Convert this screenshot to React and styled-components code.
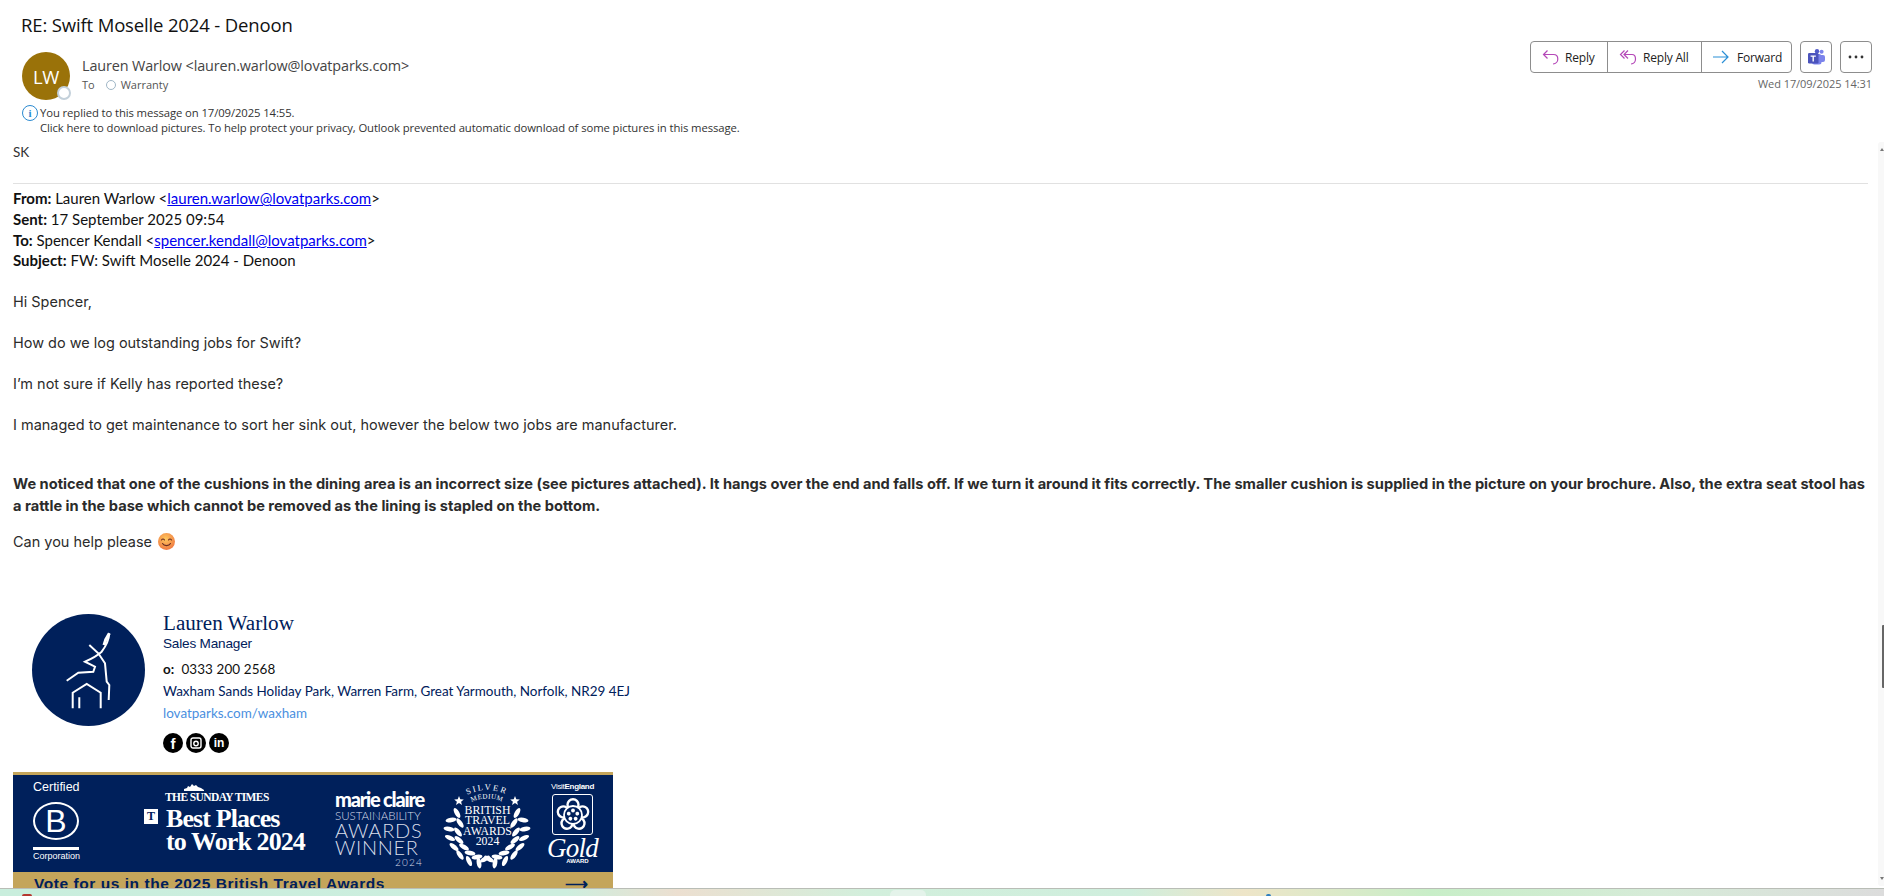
import React from 'react'
import styled, { createGlobalStyle } from 'styled-components'

const navy = '#00205b'
const gold = '#c4a55b'
const purple = '#b548b8'

const GlobalStyle = createGlobalStyle`
  html, body { margin: 0; padding: 0; height: 100%; background: #fff; overflow: hidden; }
  #root { height: 100%; }
  * { box-sizing: border-box; }
`

const Page = styled.div`
  height: 896px;
  display: flex;
  flex-direction: column;
  font-family: "Open Sans", sans-serif;
  color: #262626;
`
const Header = styled.header`
  flex: none;
  height: 142px;
  padding: 13px 12px 0 22px;
`
const Subject = styled.h1`
  margin: 0 0 0 -1px;
  font: 400 18.500px/24px "Open Sans", sans-serif;
  letter-spacing: -0.15px;
  color: #111;
`
const HeaderRow = styled.div`
  display: flex;
  margin-top: 15px;
`
const AvatarWrap = styled.div`
  position: relative;
  width: 48px;
  height: 48px;
  flex: none;
`
const Avatar = styled.div`
  width: 48px;
  height: 48px;
  border-radius: 50%;
  background: #9a7209;
  color: #fff;
  display: flex;
  align-items: center;
  justify-content: center;
  font-size: 18.500px;
  letter-spacing: -0.3px;
`
const Presence = styled.span`
  position: absolute;
  right: -1px;
  bottom: 0;
  width: 14px;
  height: 14px;
  border-radius: 50%;
  background: #fff;
  border: 2px solid #c3d0da;
`
const Sender = styled.div`
  margin-left: 12px;
  flex: 1;
`
const SenderName = styled.div`
  font-size: 14.400px;
  line-height: 20px;
  margin-top: 4px;
  letter-spacing: -0.12px;
  color: #444;
`
const Recipients = styled.div`
  display: flex;
  align-items: center;
  font-size: 11px;
  line-height: 16px;
  margin-top: 1px;
  color: #555;
`
const RecipientDot = styled.span`
  width: 10px;
  height: 10px;
  border-radius: 50%;
  border: 1px solid #9fb6c6;
  margin: 0 5px 0 11px;
`
const Actions = styled.div`
  display: flex;
  flex-direction: column;
  align-items: flex-end;
  margin-top: -11px;
`
const ActionRow = styled.div`
  display: flex;
  gap: 8px;
`
const ButtonGroup = styled.div`
  display: flex;
  width: 262px;
  height: 32px;
  border: 1px solid #8d8d8d;
  border-radius: 4px;
`
const ActionButton = styled.button`
  width: ${p => p.$w}px;
  height: 100%;
  padding: 0 0 0 ${p => p.$pad}px;
  display: flex;
  align-items: center;
  gap: ${p => p.$gap}px;
  background: none;
  border: 0;
  border-right: ${p => p.$last ? '0' : '1px solid #8d8d8d'};
  font: 400 12px "Open Sans", sans-serif;
  letter-spacing: -0.2px;
  color: #222;
`
const IconButton = styled.button`
  width: 32px;
  height: 32px;
  padding: 0;
  display: flex;
  align-items: center;
  justify-content: center;
  background: #fff;
  border: 1px solid #8d8d8d;
  border-radius: 4px;
`
const Stamp = styled.div`
  font-size: 11px;
  line-height: 16px;
  margin-top: 3px;
  letter-spacing: -0.06px;
  color: #666;
`
const Notice = styled.div`
  display: flex;
  margin-top: 5px;
  font-size: 11.300px;
  line-height: 15px;
  letter-spacing: -0.1px;
  color: #333;
`
const InfoIcon = styled.span`
  width: 16px;
  height: 16px;
  margin-right: 2px;
  flex: none;
  border: 1px solid #2b8ad0;
  border-radius: 50%;
  color: #2b8ad0;
  font: 700 11px/14px "Liberation Serif", serif;
  text-align: center;
`
const BodyRow = styled.div`
  flex: 1;
  min-height: 0;
  display: flex;
`
const Content = styled.main`
  flex: 1;
  min-width: 0;
  padding: 0 10px 0 13px;
  overflow: hidden;
`
const Track = styled.div`
  flex: none;
  width: 6px;
  margin-bottom: 2px;
  background: #f8f8f8;
  border-radius: 3px 0 0 3px;
  position: relative;
  &::before, &::after {
    content: '';
    position: absolute;
    right: 0;
    border-left: 2px solid transparent;
    border-right: 2px solid transparent;
  }
  &::before { top: 6px; border-bottom: 3px solid #777; }
  &::after { bottom: 6px; border-top: 3px solid #777; }
`
const Thumb = styled.div`
  position: absolute;
  top: 483px;
  right: 0;
  width: 2px;
  height: 63px;
  border-radius: 1px 0 0 1px;
  background: #666;
`
const Initials = styled.div`
  font: 400 13.500px/20px "Lato", sans-serif;
  height: 41px;
  color: #333;
`
const Rule = styled.hr`
  margin: 0;
  border: 0;
  border-top: 1px solid #e1e1e1;
`
const Quoted = styled.div`
  font: 400 15px/20.800px "Lato", sans-serif;
  color: #111;
  margin-top: 4px;
  height: 86px;
  b { font-weight: 700; }
  a { color: #0000ee; text-decoration: underline; }
`
const Para = styled.p`
  margin: ${p => p.$top}px 0 0;
  font: 400 14.470px/20px "Inter", sans-serif;
  color: #2b2b2b;
`
const StrongPara = styled(Para)`
  margin-right: -6px;
  font: 700 14.640px/22px "Inter", sans-serif;
`
const EmojiBox = styled.svg`
  margin-left: 6px;
  vertical-align: -3px;
`
const Signature = styled.section`
  display: flex;
  margin: 62px 0 0 19px;
`
const Roundel = styled.div`
  flex: none;
  width: 113px;
  height: 112px;
  border-radius: 50%;
  background: ${navy};
`
const SigText = styled.div`
  margin: -3px 0 0 18px;
  font: 400 13.460px/22px "Lato", sans-serif;
  color: ${navy};
`
const SigName = styled.div`
  font: 400 21.100px/24px "Liberation Serif", serif;
`
const SigRole = styled.div`
  font: 400 13.600px/18px "Liberation Sans", sans-serif;
  letter-spacing: -0.2px;
  margin-bottom: 5px;
`
const SigPhone = styled.div`
  color: #111;
  letter-spacing: 0.1px;
  b { font-weight: 700; margin-right: 7px; }
`
const SigLink = styled.div`
  color: #4a8fe0;
`
const Socials = styled.div`
  display: flex;
  gap: 3px;
  margin-top: 9px;
`
const Social = styled.span`
  width: 20px;
  height: 20px;
  border-radius: 50%;
  background: #000;
  display: flex;
  align-items: center;
  justify-content: center;
  color: #fff;
  font: 700 ${p => p.$size}px/1 "Liberation Sans", sans-serif;
`
const Banner = styled.section`
  width: 600px;
  margin-top: 19px;
  border-top: 3px solid ${gold};
`
const BannerMain = styled.div`
  height: 97px;
  background: ${navy};
  color: #fff;
  display: flex;
  padding-left: 20px;
`
const Col = styled.div`
  flex: none;
  width: ${p => p.$w}px;
  margin-left: ${p => p.$ml || 0}px;
  padding-top: ${p => p.$pt || 0}px;
  display: flex;
  flex-direction: column;
  align-items: ${p => p.$align || 'flex-start'};
  position: relative;
`
const Tiny = styled.div`
  font: ${p => p.$weight || 400} ${p => p.$size}px/${p => p.$line}px "Liberation Sans", sans-serif;
  letter-spacing: ${p => p.$track || 0}px;
  margin-left: ${p => p.$ml || 0}px;
  color: #fff;
  white-space: nowrap;
  b { font-weight: 700; }
`
const BCircle = styled.div`
  width: 46px;
  height: 38px;
  margin-top: 8px;
  border: 2px solid #fff;
  border-radius: 50%;
  display: flex;
  align-items: center;
  justify-content: center;
  font: 400 32px/1 "Liberation Sans", sans-serif;
`
const BBar = styled.div`
  width: 46px;
  height: 3px;
  margin: 7px 0 1px;
  background: #fff;
`
const Crown = styled.svg`
  position: absolute;
  left: 40px;
  top: 9px;
`
const Times = styled.div`
  font: 700 ${p => p.$size}px/${p => p.$line}px "Liberation Serif", serif;
  letter-spacing: ${p => p.$track || 0}px;
  margin-left: ${p => p.$ml || 0}px;
  white-space: nowrap;
`
const TBox = styled.span`
  position: absolute;
  left: 0;
  top: 34px;
  width: 14px;
  height: 15px;
  background: #fff;
  color: ${navy};
  font: 700 12px/15px "Liberation Serif", serif;
  text-align: center;
`
const MarieClaire = styled.div`
  font: 900 20px/20px "Lato", sans-serif;
  letter-spacing: -1.200px;
  white-space: nowrap;
`
const Thin = styled.div`
  font: 300 ${p => p.$size}px/${p => p.$line}px "Lato", sans-serif;
  letter-spacing: ${p => p.$track || 0}px;
  color: #d9deea;
  white-space: nowrap;
  align-self: ${p => p.$end ? 'flex-end' : 'auto'};
`
const Badge = styled.div`
  position: relative;
  width: 79px;
  height: 80px;
`
const BadgeLines = styled.div`
  position: absolute;
  left: 0;
  right: 0;
  top: 18px;
  text-align: center;
  font: 400 11.800px/10.400px "Liberation Serif", serif;
`
const TudorBox = styled.div`
  width: 41px;
  height: 41px;
  margin-top: 2px;
  border: 1px solid #fff;
  border-radius: 3px;
  display: flex;
  align-items: center;
  justify-content: center;
`
const GoldScript = styled.div`
  font: italic 400 27px/20px "Liberation Serif", serif;
  letter-spacing: -0.8px;
  margin-top: 3px;
`
const VoteBar = styled.div`
  height: 30px;
  background: ${gold};
  color: ${navy};
  display: flex;
  padding: 1px 24px 0 21px;
  justify-content: space-between;
  font: 700 15.500px/22px "Liberation Sans", sans-serif;
  letter-spacing: 0.55px;
`
const Taskbar = styled.footer`
  flex: none;
  height: 8px;
  border-top: 1px solid #b9bdb6;
  background: linear-gradient(90deg, #c9eedd 0, #cdeede 30%, #ecdfd0 36%, #d2efdc 46%, #cfeedd 60%, #eee5c8 66%, #c8eec8 76%, #d6ebd8 88%, #dcdcdc 100%);
  position: relative;
`
const TrayBit = styled.span`
  position: absolute;
  left: ${p => p.$x}px;
  bottom: 0;
  width: ${p => p.$w}px;
  height: ${p => p.$h}px;
  border-radius: 5px 5px 0 0;
  background: ${p => p.$c};
`

function ReplyIcon ({ all }) {
  return (
    <svg width={all ? 18 : 17} height="16" viewBox={all ? '0 0 18 16' : '0 0 17 16'} fill="none" stroke={purple} strokeWidth="1.2">
      {all
        ? <><path d="M5.500 1.500 1.500 5.500 5.500 9.500" /><path d="M9 1.500 5 5.500 9 9.500 M5 5.500H13C15.500 5.500 16.500 7.500 16.500 10S15 15 12 15" /></>
        : <path d="M5.500 1.500 1.500 5.500 5.500 9.500 M1.500 5.500H11.500C14.500 5.500 15.800 7.500 15.800 10S14 15 11 15" />}
    </svg>
  )
}

function ForwardIcon () {
  return (
    <svg width="16" height="14" viewBox="0 0 16 14" fill="none" stroke="#2a8fd6" strokeWidth="1.2">
      <path d="M0 7H15 M9 1 15 7 9 13" />
    </svg>
  )
}

function TeamsIcon () {
  return (
    <svg width="17" height="16" viewBox="0 0 17 16">
      <circle cx="13.600" cy="2.800" r="2" fill="#7b83eb" />
      <circle cx="9" cy="2.200" r="2.200" fill="#5059c9" />
      <rect x="11" y="6" width="6" height="7" rx="2" fill="#7b83eb" />
      <rect x="4" y="5" width="9.500" height="10.500" rx="2.500" fill="#7b83eb" />
      <rect x="0" y="4" width="10.500" height="10.500" rx="1.200" fill="#4b53bc" />
      <path d="M2.600 6.500h5.200v1.200H5.900v4.800H4.500V7.700H2.600z" fill="#fff" />
    </svg>
  )
}

function StagLogo () {
  return (
    <svg width="113" height="112" viewBox="0 0 113 112" fill="none" stroke="#fff" strokeWidth="2">
      <path d="M77.300 19.300C77 25 74 32 69.700 37.700C65 42 59 45 53 47.700L63 52.700L61.300 57.700L46.300 58.700L34.700 66.700" />
      <path d="M77.300 19.300C74 24 73 26 72 31" strokeWidth="3" />
      <path d="M57.300 31L66.300 39.300L73 49.300L74.700 67.700L77.300 71L76.700 86" />
      <path d="M40.700 94.300V78.700L54.700 70L68.700 78.700V94.300M47.300 83.300V94.300" />
    </svg>
  )
}

// leaves along the left branch of the wreath, mirrored for the right one
const leaves = [
  [9, 26, 60], [3, 33, -10], [12, 36, 55], [1, 42, 10], [10, 45, 50], [2, 51, 25],
  [11, 53, 40], [6, 60, 40], [16, 60, 30], [12, 68, 55], [22, 66, 10], [21, 74, 65],
  [29, 70, -10], [31, 76, 80], [37, 72, -30]
]
const star = '0,-5 1.300,-1.700 4.800,-1.500 2.100,.7 3,4 0,2.100 -3,4 -2.100,.7 -4.800,-1.500 -1.300,-1.700'

function Wreath () {
  return (
    <svg width="79" height="80" viewBox="0 0 79 80" fill="#fff" style={{ display: 'block', overflow: 'visible' }}>
      <polygon points={star} transform="translate(11 14)" />
      <polygon points={star} transform="translate(67 14)" />
      {leaves.map(([x, y, a], i) => (
        <g key={i}>
          <ellipse cx={x} cy={y} rx="5.500" ry="2.300" transform={`rotate(${a} ${x} ${y})`} />
          <ellipse cx={78 - x} cy={y} rx="5.500" ry="2.300" transform={`rotate(${-a} ${78 - x} ${y})`} />
        </g>
      ))}
      <path id="silverArc" d="M12 12Q39 -6 66 12" fill="none" />
      <path id="mediumArc" d="M16 19Q39 4 62 19" fill="none" />
      <text fontFamily="Liberation Serif, serif" fontSize="8.500" letterSpacing="2">
        <textPath href="#silverArc" startOffset="50%" textAnchor="middle">SILVER</textPath>
      </text>
      <text fontFamily="Liberation Serif, serif" fontSize="7" letterSpacing="0.4">
        <textPath href="#mediumArc" startOffset="50%" textAnchor="middle">MEDIUM</textPath>
      </text>
    </svg>
  )
}

function TudorRose () {
  const petals = [0, 72, 144, 216, 288]
  return (
    <svg width="34" height="34" viewBox="0 0 34 34" fill="none" stroke="#fff" strokeWidth="2.400">
      {petals.map(a => <circle key={a} cx="17" cy="6.800" r="5.500" transform={`rotate(${a} 17 17)`} />)}
      <circle cx="17" cy="17" r="9" fill={navy} strokeWidth="1.800" />
      {petals.map(a => <circle key={a} cx="17" cy="12.500" r="1.900" fill="#fff" stroke="none" transform={`rotate(${a} 17 17)`} />)}
    </svg>
  )
}

function SmileEmoji () {
  return (
    <EmojiBox width="17" height="17" viewBox="0 0 17 17" fill="none">
      <defs>
        <radialGradient id="emojiFace" cx="45%" cy="35%" r="70%">
          <stop offset="0" stopColor="#ffc85e" />
          <stop offset="1" stopColor="#ee7440" />
        </radialGradient>
      </defs>
      <circle cx="8.500" cy="8.500" r="8.500" fill="url(#emojiFace)" />
      <path d="M3.500 7C4.300 5.700 5.700 5.700 6.500 7M10.500 7C11.300 5.700 12.700 5.700 13.500 7M4.500 10.500C6 13.300 11 13.300 12.500 10.500" stroke="#6b2f22" strokeWidth="1.100" strokeLinecap="round" />
    </EmojiBox>
  )
}

export default function App () {
  return (
    <Page>
      <GlobalStyle />
      <Header>
        <Subject>RE: Swift Moselle 2024 - Denoon</Subject>
        <HeaderRow>
          <AvatarWrap>
            <Avatar>LW</Avatar>
            <Presence />
          </AvatarWrap>
          <Sender>
            <SenderName>Lauren Warlow &lt;lauren.warlow@lovatparks.com&gt;</SenderName>
            <Recipients>To<RecipientDot />Warranty</Recipients>
          </Sender>
          <Actions>
            <ActionRow>
              <ButtonGroup>
                <ActionButton $w={77} $pad={11} $gap={6}><ReplyIcon />Reply</ActionButton>
                <ActionButton $w={94} $pad={11} $gap={6}><ReplyIcon all />Reply All</ActionButton>
                <ActionButton $w={89} $pad={11} $gap={8} $last><ForwardIcon />Forward</ActionButton>
              </ButtonGroup>
              <IconButton><TeamsIcon /></IconButton>
              <IconButton>
                <svg width="16" height="4" viewBox="0 0 16 4" fill="#333"><circle cx="2" cy="2" r="1.400" /><circle cx="8" cy="2" r="1.400" /><circle cx="14" cy="2" r="1.400" /></svg>
              </IconButton>
            </ActionRow>
            <Stamp>Wed 17/09/2025 14:31</Stamp>
          </Actions>
        </HeaderRow>
        <Notice>
          <InfoIcon>i</InfoIcon>
          <div>
            You replied to this message on 17/09/2025 14:55.<br />
            Click here to download pictures. To help protect your privacy, Outlook prevented automatic download of some pictures in this message.
          </div>
        </Notice>
      </Header>
      <BodyRow>
        <Content>
          <Initials>SK</Initials>
          <Rule />
          <Quoted>
            <b>From:</b> Lauren Warlow &lt;<a href="#a">lauren.warlow@lovatparks.com</a>&gt;<br />
            <b>Sent:</b> 17 September 2025 09:54<br />
            <b>To:</b> Spencer Kendall &lt;<a href="#b">spencer.kendall@lovatparks.com</a>&gt;<br />
            <b>Subject:</b> FW: Swift Moselle 2024 - Denoon
          </Quoted>
          <Para $top={18}>Hi Spencer,</Para>
          <Para $top={21}>How do we log outstanding jobs for Swift?</Para>
          <Para $top={21}>I’m not sure if Kelly has reported these?</Para>
          <Para $top={21}>I managed to get maintenance to sort her sink out, however the below two jobs are manufacturer.</Para>
          <StrongPara $top={38}>We noticed that one of the cushions in the dining area is an incorrect size (see pictures attached). It hangs over the end and falls off. If we turn it around it fits correctly. The smaller cushion is supplied in the picture on your brochure. Also, the extra seat stool has a rattle in the base which cannot be removed as the lining is stapled on the bottom.</StrongPara>
          <Para $top={15}>Can you help please<SmileEmoji /></Para>
          <Signature>
            <Roundel><StagLogo /></Roundel>
            <SigText>
              <SigName>Lauren Warlow</SigName>
              <SigRole>Sales Manager</SigRole>
              <SigPhone><b>o:</b>0333 200 2568</SigPhone>
              <div>Waxham Sands Holiday Park, Warren Farm, Great Yarmouth, Norfolk, NR29 4EJ</div>
              <SigLink>lovatparks.com/waxham</SigLink>
              <Socials>
                <Social $size={15}>f</Social>
                <Social>
                  <svg width="12" height="12" viewBox="0 0 12 12" fill="none" stroke="#fff" strokeWidth="1.400"><rect x="1" y="1" width="10" height="10" rx="2" /><circle cx="6" cy="6.500" r="2.200" /></svg>
                </Social>
                <Social $size={12}>in</Social>
              </Socials>
            </SigText>
          </Signature>
          <Banner>
            <BannerMain>
              <Col $w={47} $pt={5}>
                <Tiny $size={12.500} $line={14}>Certified</Tiny>
                <BCircle>B</BCircle>
                <BBar />
                <Tiny $size={9} $line={11}>Corporation</Tiny>
              </Col>
              <Col $w={165} $ml={64} $pt={12}>
                <Crown width="20" height="7" viewBox="0 0 20 7" fill="#fff"><path d="M0 7V5l3-1 1-2 2 1 2-3 2 2 2-1 2 2 3 1 3 2v1z" /></Crown>
                <Times $size={11.500} $line={21} $ml={21} $track={-0.6}>THE SUNDAY TIMES</Times>
                <TBox>T</TBox>
                <Times $size={26} $line={22} $ml={22} $track={-0.9}>Best Places</Times>
                <Times $size={26} $line={24} $ml={22} $track={-0.9}>to Work 2024</Times>
              </Col>
              <Col $w={88} $ml={26} $pt={14}>
                <MarieClaire>marie claire</MarieClaire>
                <Thin $size={11.500} $line={13}>SUSTAINABILITY</Thin>
                <Thin $size={20} $line={17} $track={0.7}>AWARDS</Thin>
                <Thin $size={20} $line={17} $track={0.7}>WINNER</Thin>
                <Thin $size={10} $line={12} $track={1.200} $end>2024</Thin>
              </Col>
              <Col $w={79} $ml={25} $pt={12}>
                <Badge>
                  <Wreath />
                  <BadgeLines>BRITISH<br />TRAVEL<br />AWARDS<br />2024</BadgeLines>
                </Badge>
              </Col>
              <Col $w={41} $ml={25} $pt={7} $align="center">
                <Tiny $size={8} $line={10} $track={-0.3}>Visit<b>England</b></Tiny>
                <TudorBox><TudorRose /></TudorBox>
                <GoldScript>Gold</GoldScript>
                <Tiny $size={6} $line={7} $weight={700} $ml={10}>AWARD</Tiny>
              </Col>
            </BannerMain>
            <VoteBar>
              <span>Vote for us in the 2025 British Travel Awards</span>
              <span>⟶</span>
            </VoteBar>
          </Banner>
        </Content>
        <Track><Thumb /></Track>
      </BodyRow>
      <Taskbar>
        <TrayBit $x={22} $w={10} $h={2} $c="#b5372f" />
        <TrayBit $x={890} $w={36} $h={6} $c="#e4f3ea" />
        <TrayBit $x={1266} $w={5} $h={2} $c="#2f7fc1" />
      </Taskbar>
    </Page>
  )
}
